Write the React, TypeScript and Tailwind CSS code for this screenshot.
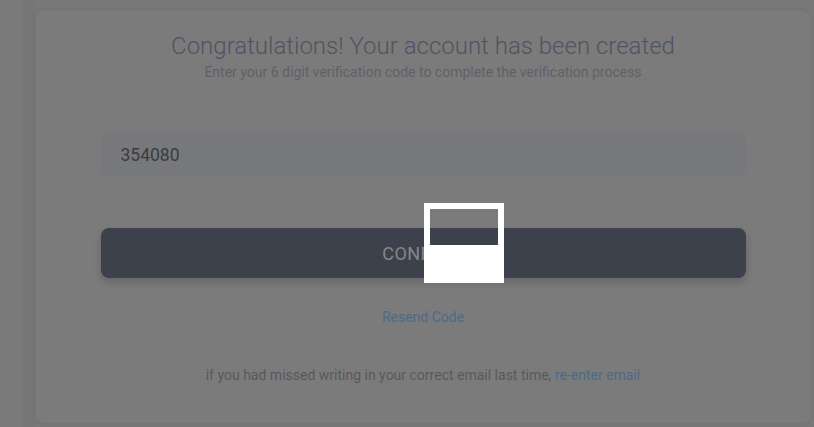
import React from "react";

export default function App() {
  return (
    <div
      className="relative w-[814px] h-[427px] overflow-hidden bg-[#777879] flex"
      style={{ fontFamily: "Roboto, 'Liberation Sans', sans-serif" }}
    >
      <div className="w-[22px] bg-[#7a7a7a]" />
      <div className="w-[13px] bg-[#767676]" />
      <div className="flex-1 pt-[10px] pb-[3px] pr-[3px]">
        <div className="h-full rounded-lg border border-[#767676] bg-[#7b7b7b] shadow-[0_0_4px_rgba(0,0,0,0.06)] flex flex-col items-center">
          <h1 className="mt-[21px] text-[24px] leading-[28px] font-light text-[#4f5462]">
            Congratulations! Your account has been created
          </h1>
          <p className="mt-[4px] text-[14px] leading-[16px] text-[#606168]">
            Enter your 6 digit verification code to complete the verification process
          </p>
          <div className="mt-[53px] w-[645px] h-[44px] rounded-lg bg-[#77787b] flex items-center pl-[20px] text-[17.5px] text-[#3b3c3f]">
            354080
          </div>
          <div className="mt-[51px] w-[645px] h-[50px] rounded-lg bg-[#3d414c] shadow-[0_4px_8px_rgba(0,0,0,0.18)] flex items-center justify-center text-[18px] text-[#858689] tracking-[0.4px]">
            CONFIRM
          </div>
          <div className="mt-[31px] text-[14px] leading-[16px] text-[#4b6b89]">Resend Code</div>
          <div className="mt-[42px] text-[14px] leading-[16px] text-[#58595c]">
            if you had missed writing in your correct email last time,{" "}
            <span className="text-[#4b6b89]">re-enter email</span>
          </div>
        </div>
      </div>
      <div className="absolute left-[424px] top-[203px] w-[80px] h-[80px] flex flex-col">
        <div className="h-[42px] border-x-[6px] border-t-[6px] border-white" />
        <div className="flex-1 bg-white" />
      </div>
    </div>
  );
}
